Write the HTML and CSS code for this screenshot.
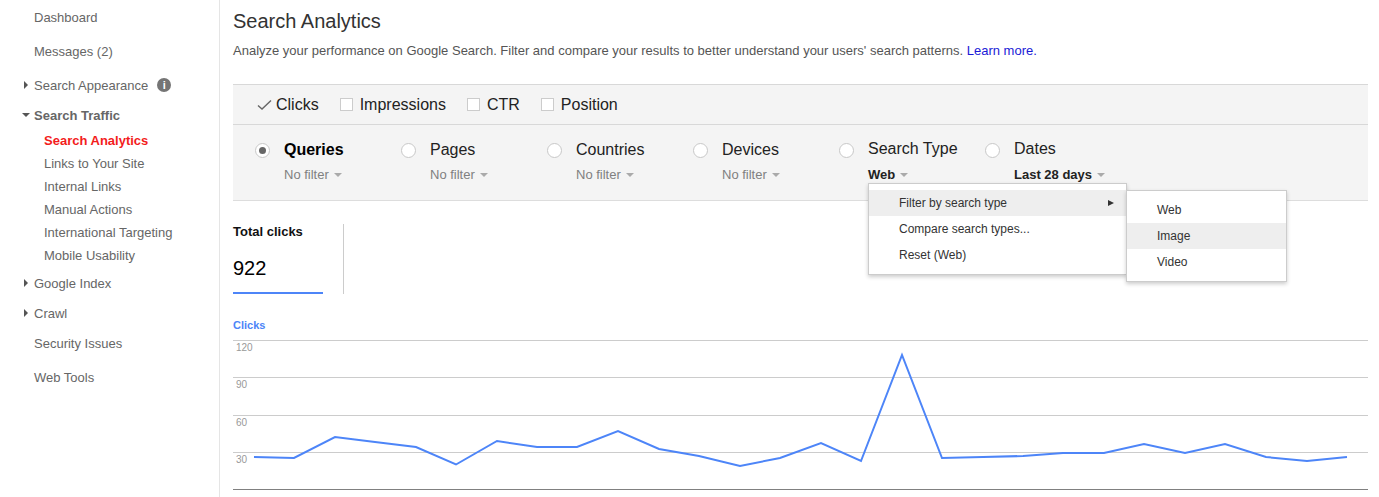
FILE: index.html
```html
<!DOCTYPE html>
<html lang="en">
<head>
<meta charset="utf-8">
<title>Search Analytics</title>
<link rel="stylesheet" href="styles.css">
</head>
<body>
<div class="page">
  <nav class="side">
    <a class="top h34">Dashboard</a>
    <a class="top h34">Messages (2)</a>
    <a class="top h34"><i class="tri-r"></i>Search Appearance<span class="info">i</span></a>
    <a class="top h26 open"><i class="tri-d"></i>Search Traffic</a>
    <div class="subs">
      <a class="sub cur">Search Analytics</a>
      <a class="sub">Links to Your Site</a>
      <a class="sub">Internal Links</a>
      <a class="sub">Manual Actions</a>
      <a class="sub">International Targeting</a>
      <a class="sub">Mobile Usability</a>
    </div>
    <a class="top h30"><i class="tri-r"></i>Google Index</a>
    <a class="top h30"><i class="tri-r"></i>Crawl</a>
    <a class="top h30">Security Issues</a>
    <a class="top h34 gap2">Web Tools</a>
  </nav>
  <main class="main">
    <h1 class="title">Search Analytics</h1>
    <p class="desc">Analyze your performance on Google Search. Filter and compare your results to better understand your users' search patterns. <a class="learn">Learn more.</a></p>
    <section class="filters">
      <div class="metrics">
        <label class="metric m-clicks"><span class="box checked"><svg width="15" height="12" viewBox="0 0 15 12"><path d="M1 6.5 L5 10 L14 1.5" fill="none" stroke="#666" stroke-width="1.4"/></svg></span>Clicks</label>
        <label class="metric m-impr"><span class="box"></span>Impressions</label>
        <label class="metric m-ctr"><span class="box"></span>CTR</label>
        <label class="metric m-pos"><span class="box"></span>Position</label>
      </div>
      <div class="dims">
        <div class="dim"><span class="radio on"></span><div><div class="dname b">Queries</div><div class="dval">No filter<i class="caret"></i></div></div></div>
        <div class="dim"><span class="radio"></span><div><div class="dname">Pages</div><div class="dval">No filter<i class="caret"></i></div></div></div>
        <div class="dim"><span class="radio"></span><div><div class="dname">Countries</div><div class="dval">No filter<i class="caret"></i></div></div></div>
        <div class="dim"><span class="radio"></span><div><div class="dname">Devices</div><div class="dval">No filter<i class="caret"></i></div></div></div>
        <div class="dim"><span class="radio"></span><div><div class="dname st">Search Type</div><div class="dval set">Web<i class="caret"></i></div></div>
          <div class="menu menu-a">
            <div class="mi hl">Filter by search type<i class="tri-m"></i></div>
            <div class="mi">Compare search types...</div>
            <div class="mi">Reset (Web)</div>
          </div>
          <div class="menu menu-b">
            <div class="mi">Web</div>
            <div class="mi hl">Image</div>
            <div class="mi">Video</div>
          </div>
        </div>
        <div class="dim"><span class="radio"></span><div><div class="dname st">Dates</div><div class="dval set">Last 28 days<i class="caret"></i></div></div></div>
      </div>
    </section>
    <section class="summary">
      <div class="tile">
        <div class="tile-label">Total clicks</div>
        <div class="tile-num">922</div>
      </div>
    </section>
    <div class="series">Clicks</div>
    <svg class="chart" width="1135" height="151" viewBox="233 339 1135 151">
      <g stroke="#ccc" stroke-width="1">
        <line x1="233" x2="1368" y1="340.5" y2="340.5"/>
        <line x1="233" x2="1368" y1="377.5" y2="377.5"/>
        <line x1="233" x2="1368" y1="415.5" y2="415.5"/>
        <line x1="233" x2="1368" y1="452.5" y2="452.5"/>
      </g>
      <line x1="233" x2="1368" y1="489.5" y2="489.5" stroke="#808080"/>
      <g class="tick">
        <text x="236" y="351">120</text>
        <text x="236" y="388">90</text>
        <text x="236" y="426">60</text>
        <text x="236" y="463">30</text>
      </g>
      <polyline fill="none" stroke="#4d85f8" stroke-width="2" points="254,457 294,458 335,437 375,442 416,447 456,464.5 497,441 537,447 577,447 618,431 659,449 699,456 740,466 780,458 821,443 861,461 902,355 942,458 983,457 1023,456 1063,453 1104,453 1144,444 1185,453 1225,444 1266,457 1307,461 1347,457"/>
    </svg>
  </main>
</div>
</body>
</html>
```
FILE: styles.css
```css
* { box-sizing: border-box; }
html, body { margin: 0; padding: 0; background: #fff; overflow: hidden; }
body { font-family: "Liberation Sans", Arial, sans-serif; color: #000; }
.page { display: flex; height: 497px; }

.side { width: 220px; flex: none; border-right: 1px solid #e5e5e5; font-size: 13px; color: #666; padding-top: 0; }
.top { display: flex; align-items: center; padding-left: 34px; position: relative; }
.h34 { height: 34px; }
.h30 { height: 30px; }
.h26 { height: 26px; }
.gap2 { margin-top: 2px; }
.open { font-weight: bold; }
.subs { padding-top: 1px; margin-bottom: 1px; }
.sub { display: flex; align-items: center; height: 23px; padding-left: 44px; }
.cur { color: #f31c1c; font-weight: bold; }
.tri-r { position: absolute; left: 24px; top: 50%; margin-top: -4px; border-left: 4px solid #555; border-top: 4px solid transparent; border-bottom: 4px solid transparent; }
.tri-d { position: absolute; left: 22px; top: 50%; margin-top: -2px; border-top: 4px solid #555; border-left: 4px solid transparent; border-right: 4px solid transparent; }
.info { width: 14px; height: 14px; margin-left: 9px; border-radius: 50%; background: #757575; color: #fff; font-size: 11px; font-weight: bold; line-height: 14px; text-align: center; }

.main { flex: 1; padding: 0 11px 0 13px; min-width: 0; }
.title { margin: 0; padding-top: 10px; height: 39px; font-size: 20px; font-weight: normal; line-height: 23px; color: #333; }
.desc { margin: 0; height: 45px; padding-top: 4px; font-size: 13px; line-height: 16px; color: #555; }
.learn { color: #1a1ad6; }

.filters { background: #f4f4f4; border-top: 1px solid #d8d8d8; border-bottom: 1px solid #ddd; height: 117px; }
.metrics { display: flex; align-items: center; height: 40px; border-bottom: 1px solid #d8d8d8; padding-left: 24px; font-size: 16px; color: #222; }
.metric { display: flex; align-items: center; margin-right: 21px; }
.m-clicks { margin-right: 21px; gap: 4px; }
.m-impr { margin-right: 21px; gap: 7px; }
.m-ctr { margin-right: 21px; gap: 7px; }
.m-pos { gap: 7px; }
.box { width: 13px; height: 13px; background: #fff; border: 1px solid #ccc; display: flex; align-items: center; justify-content: center; }
.box.checked { background: none; border: 0; width: 15px; height: 12px; }
.box svg { display: block; }

.dims { display: flex; }
.dim { width: 146px; display: flex; padding: 15px 0 0 22px; gap: 14px; position: relative; }
.radio { width: 15px; height: 15px; flex: none; margin-top: 3px; border-radius: 50%; background: #fff; border: 1px solid #c8c8c8; position: relative; }
.radio.on::after { content: ""; position: absolute; left: 3px; top: 3px; width: 7px; height: 7px; border-radius: 50%; background: #666; }
.dname { font-size: 16px; line-height: 20px; color: #222; white-space: nowrap; }
.dname.b { font-weight: bold; color: #000; }
.dname.st { margin-top: -1px; }
.dval { margin-top: 7px; font-size: 13px; line-height: 15px; color: #808080; white-space: nowrap; }
.dval.set { color: #222; font-weight: bold; margin-top: 8px; }
.caret { display: inline-block; margin-left: 5px; vertical-align: 2px; border-top: 4px solid #aaa; border-left: 4px solid transparent; border-right: 4px solid transparent; }

.menu { position: absolute; background: #fff; border: 1px solid #ccc; box-shadow: 0 2px 4px rgba(0,0,0,.2); padding: 6px 0 6px; font-size: 12px; color: #333; z-index: 2; }
.menu-a { left: 51px; top: 58px; width: 259px; height: 92px; }
.menu-b { left: 309px; top: 65px; width: 161px; height: 92px; z-index: 3; }
.mi { position: relative; height: 26px; line-height: 26px; padding-left: 30px; }
.hl { background: #eee; }
.tri-m { position: absolute; right: 12px; top: 10px; border-left: 6px solid #333; border-top: 3px solid transparent; border-bottom: 3px solid transparent; }

.summary { height: 93px; padding-top: 23px; }
.tile { width: 111px; height: 70px; border-right: 1px solid #ccc; position: relative; padding-top: 0; }
.tile::after { content: ""; position: absolute; left: 0; top: 68px; width: 90px; height: 2px; background: #4d85f8; }
.tile-label { font-size: 13px; font-weight: bold; line-height: 16px; color: #111; }
.tile-num { margin-top: 16px; font-size: 20px; line-height: 24px; color: #000; }
.series { height: 45px; padding-top: 24px; font-size: 11px; font-weight: bold; line-height: 14px; color: #4d85f8; }
.chart { display: block; }
.tick text { font-family: "Liberation Sans", Arial, sans-serif; font-size: 10px; fill: #999; }
```
